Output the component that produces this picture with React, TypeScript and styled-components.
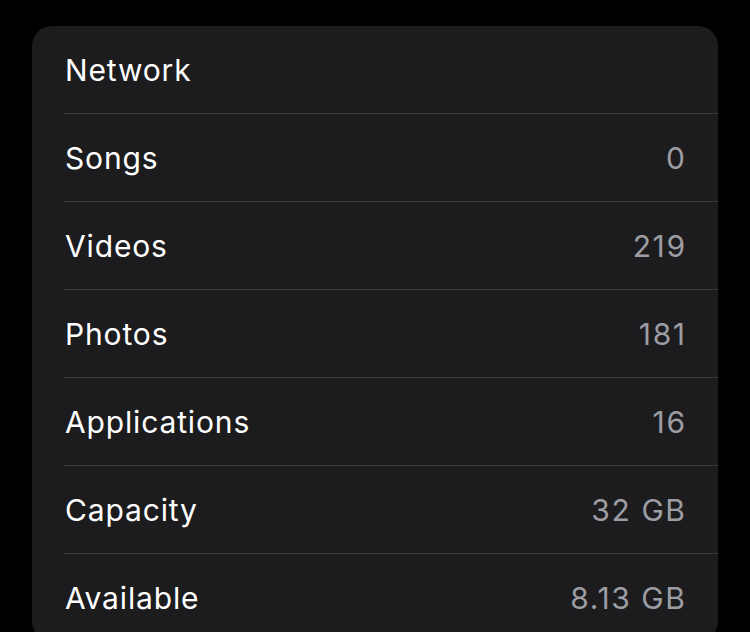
import styled, { createGlobalStyle } from "styled-components";

const GlobalStyle = createGlobalStyle`
  html, body {
    margin: 0;
    padding: 0;
    background: #000000;
    height: 632px;
    overflow: hidden;
  }
  body {
    font-family: Inter, "Noto Sans", "Liberation Sans", sans-serif;
    -webkit-font-smoothing: antialiased;
  }
`;

const Page = styled.div`
  padding: 26px 32px 0 32px;
`;

const Card = styled.div`
  background: #1c1c1e;
  border-radius: 20px;
  width: 686px;
  overflow: hidden;
`;

const Row = styled.div`
  display: flex;
  align-items: center;
  justify-content: space-between;
  height: 87px;
  margin-left: 32px;
  padding-right: 33px;
  border-bottom: 1px solid #3d3d40;

  &:last-child {
    border-bottom: none;
  }
`;

const Label = styled.span`
  color: #ffffff;
  font-size: 30px;
  letter-spacing: 0.85px;
  padding-left: 1px;
`;

const Value = styled.span`
  color: #9d9da3;
  font-size: 30px;
  letter-spacing: 1.6px;
  margin-right: -1.6px;
`;

const rows: { label: string; value?: string }[] = [
  { label: "Network" },
  { label: "Songs", value: "0" },
  { label: "Videos", value: "219" },
  { label: "Photos", value: "181" },
  { label: "Applications", value: "16" },
  { label: "Capacity", value: "32 GB" },
  { label: "Available", value: "8.13 GB" },
];

export default function App() {
  return (
    <>
      <GlobalStyle />
      <Page>
        <Card>
          {rows.map((r) => (
            <Row key={r.label}>
              <Label>{r.label}</Label>
              {r.value && <Value>{r.value}</Value>}
            </Row>
          ))}
        </Card>
      </Page>
    </>
  );
}
